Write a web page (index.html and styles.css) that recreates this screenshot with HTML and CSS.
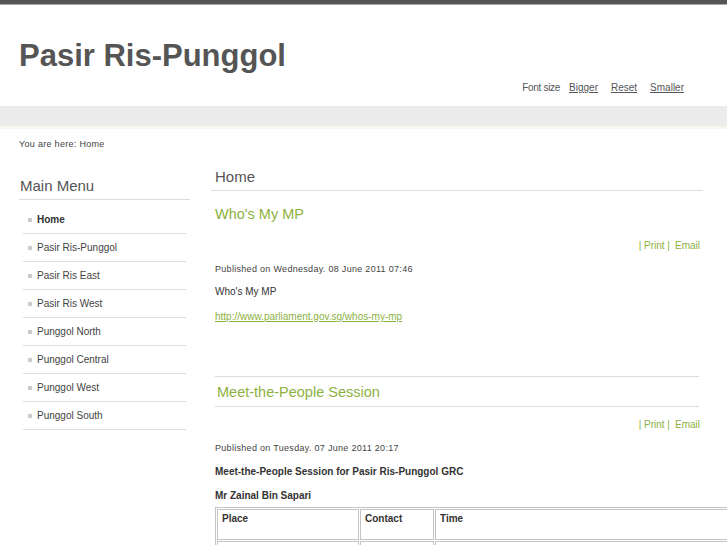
FILE: index.html
```html
<!DOCTYPE html>
<html lang="en">
<head>
<meta charset="utf-8">
<title>Pasir Ris-Punggol</title>
<link rel="stylesheet" href="styles.css">
</head>
<body>
<div class="topbar"></div>
<header class="header">
  <h1 class="logo">Pasir Ris-Punggol</h1>
  <div class="fontsize">
    <span class="fs-label">Font size</span>
    <span class="fs-links"><a href="#">Bigger</a><a href="#">Reset</a><a href="#">Smaller</a></span>
  </div>
</header>
<div class="band"></div>
<div class="breadcrumbs">You are here: Home</div>
<div class="main">
  <aside class="sidebar">
    <h3 class="menu-title">Main Menu</h3>
    <ul class="menu">
      <li class="active"><a href="#">Home</a></li>
      <li><a href="#">Pasir Ris-Punggol</a></li>
      <li><a href="#">Pasir Ris East</a></li>
      <li><a href="#">Pasir Ris West</a></li>
      <li><a href="#">Punggol North</a></li>
      <li><a href="#">Punggol Central</a></li>
      <li><a href="#">Punggol West</a></li>
      <li><a href="#">Punggol South</a></li>
    </ul>
  </aside>
  <section class="content">
    <h2 class="page-title">Home</h2>
    <article class="item first">
      <h2 class="item-title">Who's My MP</h2>
      <div class="actions"><a href="#">| Print |</a><a href="#">Email</a></div>
      <p class="published">Published on Wednesday. 08 June 2011 07:46</p>
      <p class="text">Who's My MP</p>
      <p class="text"><a class="link" href="#">http://www.parliament.gov.sg/whos-my-mp</a></p>
    </article>
    <article class="item second">
      <h2 class="item-title bordered">Meet-the-People Session</h2>
      <div class="actions"><a href="#">| Print |</a><a href="#">Email</a></div>
      <p class="published">Published on Tuesday. 07 June 2011 20:17</p>
      <p class="text strong">Meet-the-People Session for Pasir Ris-Punggol GRC</p>
      <p class="text strong tight">Mr Zainal Bin Sapari</p>
      <table class="mps">
        <tr><th class="c-place">Place</th><th class="c-contact">Contact</th><th class="c-time">Time</th></tr>
        <tr><td>Blk 443 Pasir Ris Dr 6 #01-202</td><td>6584 1234</td><td>Monday 7.30pm</td></tr>
      </table>
    </article>
  </section>
</div>
</body>
</html>
```
FILE: styles.css
```css
html { overflow: hidden; }
body {
  margin: 0;
  background: #fff;
  font-family: "Liberation Sans", Arial, sans-serif;
  color: #333;
}
a { color: inherit; }

.topbar {
  height: 4px;
  background: #555;
  border-bottom: 1px solid #a8a8a8;
}

.header {
  height: 101px;
  padding: 0 43px 0 19px;
  display: flex;
  flex-direction: column;
}
.logo {
  margin: 33px 0 0;
  font-size: 31px;
  line-height: 36px;
  font-weight: bold;
  color: #555;
}
.fontsize {
  margin-top: 7px;
  display: flex;
  justify-content: flex-end;
  font-size: 10px;
  line-height: 14px;
  color: #555;
}
.fs-label { letter-spacing: -0.3px; }
.fs-links { display: flex; gap: 13px; margin-left: 9px; }
.fs-links a { color: #555; text-decoration: underline; }

.band {
  height: 20px;
  background: #ececec;
  border-bottom: 3px solid #f6f7ef;
}

.breadcrumbs {
  margin: 9px 0 0 19px;
  font-size: 9px;
  line-height: 12px;
  letter-spacing: 0.3px;
  color: #444;
}

.main {
  display: flex;
  margin-top: 18px;
  padding-left: 19px;
  gap: 21px;
}

.sidebar { width: 171px; flex: none; padding-top: 9px; }
.menu-title {
  margin: 0;
  padding: 0 0 4px 1px;
  font-size: 15px;
  line-height: 18px;
  font-weight: normal;
  color: #555;
  border-bottom: 1px solid #ddd;
}
.menu {
  list-style: none;
  margin: 6px 4px 0;
  padding: 0;
}
.menu li {
  height: 27px;
  border-bottom: 1px solid #ddd;
  display: flex;
  align-items: center;
  padding-left: 5px;
  font-size: 10px;
  color: #444;
}
.menu li::before {
  content: "";
  width: 4px;
  height: 4px;
  background: #ccc;
  margin-right: 5px;
  flex: none;
}
.menu li a { text-decoration: none; color: #444; }
.menu li.active a { font-weight: bold; color: #333; }

.content { width: 492px; flex: none; }
.page-title {
  margin: 0;
  padding: 0 0 4px 4px;
  font-size: 15px;
  line-height: 18px;
  font-weight: normal;
  color: #555;
  border-bottom: 1px solid #ddd;
}

.item { padding-left: 4px; padding-right: 4px; }
.item-title {
  margin: 14px 0 0;
  font-size: 14.5px;
  line-height: 18px;
  font-weight: normal;
  color: #8db13f;
}
.item-title.bordered {
  margin-top: 0;
  padding: 6px 0 5px 2px;
  border-top: 1px solid #ddd;
  border-bottom: 1px solid #ddd;
}
.actions {
  display: flex;
  justify-content: flex-end;
  gap: 5px;
  margin-top: 16px;
  font-size: 10px;
  line-height: 14px;
  margin-right: -1px;
}
.second .actions { margin-top: 11px; }
.actions a { color: #8db13f; text-decoration: none; }

.published {
  margin: 10px 0 0;
  font-size: 9px;
  line-height: 12px;
  letter-spacing: 0.3px;
  color: #444;
}
.text {
  margin: 10px 0 0;
  font-size: 10px;
  line-height: 14px;
  color: #333;
}
.first .text + .text { margin-top: 11px; }
.link { color: #8db13f; text-decoration: underline; }
.strong { font-weight: bold; margin-top: 11px; }
.strong.tight { margin-top: 10px; }

.second { margin-top: 52px; }

.mps {
  margin-top: 4px;
  width: 560px;
  border: 1px solid #c4c4c4;
  border-spacing: 1px;
  font-size: 10px;
  color: #333;
}
.mps th, .mps td {
  border: 1px solid #c4c4c4;
  padding: 2px 4px;
  text-align: left;
  vertical-align: top;
  line-height: 14px;
}
.mps th { height: 25px; font-weight: bold; }
.c-place { width: 132px; }
.c-contact { width: 64px; }
```
